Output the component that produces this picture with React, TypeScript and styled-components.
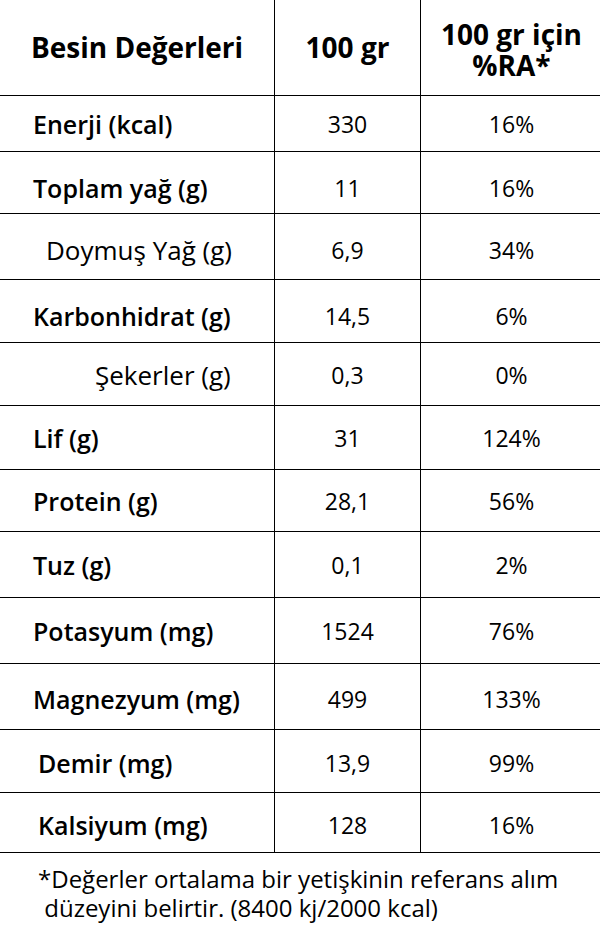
import React from "react";
import styled, { createGlobalStyle } from "styled-components";

const Global = createGlobalStyle`
  html, body { margin: 0; padding: 0; background: #fff; }
  body { font-family: "Open Sans", "Liberation Sans", sans-serif; color: #000; }
`;

const Wrap = styled.div`
  width: 600px;
  height: 950px;
  background: #fff;
`;

const Table = styled.table`
  width: 600px;
  border-collapse: collapse;
  table-layout: fixed;
`;

const HeadCell = styled.th<{ $w: number }>`
  width: ${(p) => p.$w}px;
  height: 95px;
  padding: 0;
  font-size: 28px;
  font-weight: 700;
  line-height: 31px;
  text-align: center;
  vertical-align: middle;
  border-bottom: 1px solid #000;
  border-right: 1px solid #000;
  &:last-child { border-right: none; }
`;

const HeadStack = styled.div`
  display: flex;
  flex-direction: column;
  align-items: center;
  padding-top: 4px;
`;

const Row = styled.tr<{ $h: number }>`
  height: ${(p) => p.$h}px;
`;

const LabelCell = styled.td<{ $indent: number; $bold: boolean; $shift: number }>`
  padding: ${(p) => p.$shift}px 0 0 ${(p) => p.$indent}px;
  font-size: ${(p) => (p.$bold ? 25 : 26)}px;
  font-weight: ${(p) => (p.$bold ? 600 : 400)};
  line-height: 30px;
  text-align: left;
  vertical-align: middle;
  border-bottom: 1px solid #000;
  border-right: 1px solid #000;
  white-space: nowrap;
`;

const ValueCell = styled.td<{ $shift: number }>`
  padding: ${(p) => p.$shift}px 0 0 0;
  font-size: 23px;
  font-weight: 400;
  line-height: 30px;
  text-align: center;
  vertical-align: middle;
  border-bottom: 1px solid #000;
  border-right: 1px solid #000;
  &:last-child { border-right: none; }
`;

const Note = styled.p`
  margin: 0;
  padding: 11px 0 0 38px;
  font-size: 24px;
  line-height: 29px;
  font-weight: 400;
  white-space: pre-wrap;
`;

type Item = { label: string; amount: string; ra: string; h: number; indent: number; bold: boolean; shift: number };

const rows: Item[] = [
  { label: "Enerji (kcal)", amount: "330", ra: "16%", h: 56, indent: 33, bold: true, shift: 0 },
  { label: "Toplam yağ (g)", amount: "11", ra: "16%", h: 62, indent: 33, bold: true, shift: 10 },
  { label: "Doymuş Yağ (g)", amount: "6,9", ra: "34%", h: 66, indent: 46, bold: false, shift: 6 },
  { label: "Karbonhidrat (g)", amount: "14,5", ra: "6%", h: 63, indent: 33, bold: true, shift: 9 },
  { label: "Şekerler (g)", amount: "0,3", ra: "0%", h: 63, indent: 95, bold: false, shift: 2 },
  { label: "Lif (g)", amount: "31", ra: "124%", h: 64, indent: 33, bold: true, shift: 0 },
  { label: "Protein (g)", amount: "28,1", ra: "56%", h: 62, indent: 33, bold: true, shift: 0 },
  { label: "Tuz (g)", amount: "0,1", ra: "2%", h: 66, indent: 33, bold: true, shift: 0 },
  { label: "Potasyum (mg)", amount: "1524", ra: "76%", h: 66, indent: 33, bold: true, shift: 0 },
  { label: "Magnezyum (mg)", amount: "499", ra: "133%", h: 66, indent: 33, bold: true, shift: 4 },
  { label: "Demir (mg)", amount: "13,9", ra: "99%", h: 63, indent: 38, bold: true, shift: 4 },
  { label: "Kalsiyum (mg)", amount: "128", ra: "16%", h: 60, indent: 38, bold: true, shift: 4 },
];

export default function App() {
  return (
    <Wrap>
      <Global />
      <Table>
        <thead>
          <tr>
            <HeadCell $w={274}>Besin Değerleri</HeadCell>
            <HeadCell $w={145}>100 gr</HeadCell>
            <HeadCell $w={181}>
              <HeadStack>
                <span>100 gr için</span>
                <span>%RA*</span>
              </HeadStack>
            </HeadCell>
          </tr>
        </thead>
        <tbody>
          {rows.map((r) => (
            <Row key={r.label} $h={r.h}>
              <LabelCell $indent={r.indent} $bold={r.bold} $shift={r.shift}>
                {r.label}
              </LabelCell>
              <ValueCell $shift={r.shift}>{r.amount}</ValueCell>
              <ValueCell $shift={r.shift}>{r.ra}</ValueCell>
            </Row>
          ))}
        </tbody>
      </Table>
      <Note>{"*Değerler ortalama bir yetişkinin referans alım\n düzeyini belirtir. (8400 kj/2000 kcal)"}</Note>
    </Wrap>
  );
}
